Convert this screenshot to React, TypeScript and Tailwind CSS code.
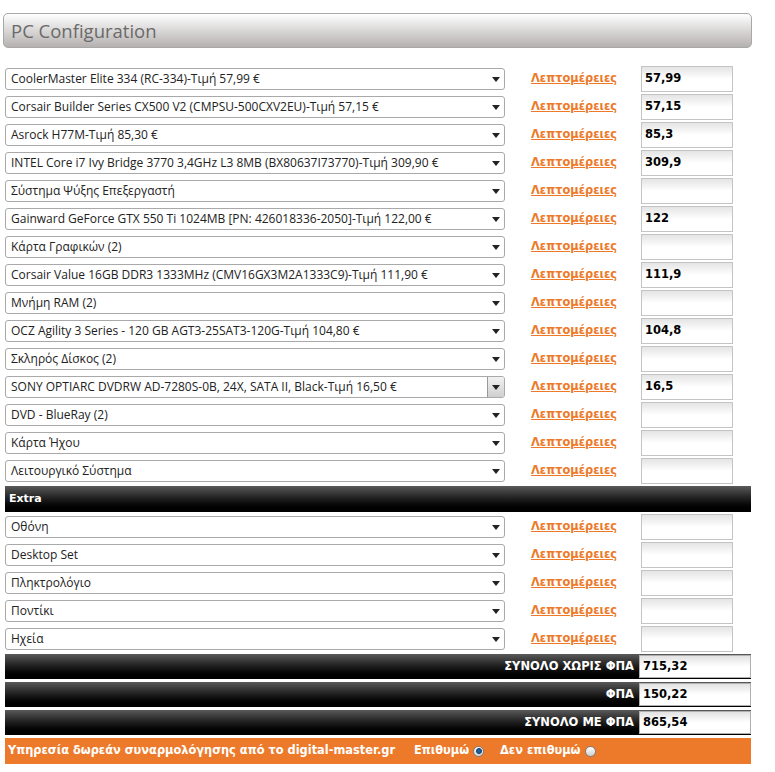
import React from 'react';

type Row = { label: string; price?: string; hover?: boolean };

const main: Row[] = [
  { label: 'CoolerMaster Elite 334 (RC-334)-Τιμή 57,99 €', price: '57,99' },
  { label: 'Corsair Builder Series CX500 V2 (CMPSU-500CXV2EU)-Τιμή 57,15 €', price: '57,15' },
  { label: 'Asrock H77M-Τιμή 85,30 €', price: '85,3' },
  { label: 'INTEL Core i7 Ivy Bridge 3770 3,4GHz L3 8MB (BX80637I73770)-Τιμή 309,90 €', price: '309,9' },
  { label: 'Σύστημα Ψύξης Επεξεργαστή' },
  { label: 'Gainward GeForce GTX 550 Ti 1024MB [PN: 426018336-2050]-Τιμή 122,00 €', price: '122' },
  { label: 'Κάρτα Γραφικών (2)' },
  { label: 'Corsair Value 16GB DDR3 1333MHz (CMV16GX3M2A1333C9)-Τιμή 111,90 €', price: '111,9' },
  { label: 'Μνήμη RAM (2)' },
  { label: 'OCZ Agility 3 Series - 120 GB AGT3-25SAT3-120G-Τιμή 104,80 €', price: '104,8' },
  { label: 'Σκληρός Δίσκος (2)' },
  { label: 'SONY OPTIARC DVDRW AD-7280S-0B, 24X, SATA II, Black-Τιμή 16,50 €', price: '16,5', hover: true },
  { label: 'DVD - BlueRay (2)' },
  { label: 'Κάρτα Ήχου' },
  { label: 'Λειτουργικό Σύστημα' },
];

const extra: Row[] = [
  { label: 'Οθόνη' },
  { label: 'Desktop Set' },
  { label: 'Πληκτρολόγιο' },
  { label: 'Ποντίκι' },
  { label: 'Ηχεία' },
];

const totals = [
  { label: 'ΣΥΝΟΛΟ ΧΩΡΙΣ ΦΠΑ', value: '715,32' },
  { label: 'ΦΠΑ', value: '150,22' },
  { label: 'ΣΥΝΟΛΟ ΜΕ ΦΠΑ', value: '865,54' },
];

const uiFont = { fontFamily: '"Open Sans", "Noto Sans", sans-serif' };
const verdana = { fontFamily: '"DejaVu Sans", Verdana, sans-serif' };

const Arrow = () => (
  <svg width="8" height="5" viewBox="0 0 8 5">
    <path d="M0 0h8L4 5z" fill="#222" />
  </svg>
);

const ConfigRow = ({ row }: { row: Row }) => (
  <div className="flex items-center h-[28px]">
    <div className="w-[500px] h-[22px] flex items-center border border-[#a9a9a9] rounded-[3px] bg-white">
      <span className="flex-1 pl-[5px] text-[12px] text-[#222] whitespace-nowrap overflow-hidden" style={uiFont}>
        {row.label}
      </span>
      {row.hover ? (
        <div className="w-[17px] h-[20px] flex items-center justify-center bg-gradient-to-b from-[#f2f2f2] to-[#cfcfcf] border-l border-[#9a9a9a] rounded-r-[2px]">
          <Arrow />
        </div>
      ) : (
        <div className="w-[17px] h-[20px] flex items-center justify-center">
          <Arrow />
        </div>
      )}
    </div>
    <a
      className="ml-[26px] w-[110px] text-[11.4px] font-bold text-[#ec7a2a] underline"
      style={verdana}
    >
      Λεπτομέρειες
    </a>
    <div
      className="w-[92px] h-[26px] flex items-center pl-[3px] border border-[#c4c4c4] bg-gradient-to-b from-[#e4e4e4] via-white to-white text-[11.5px] font-bold text-black"
      style={verdana}
    >
      {row.price}
    </div>
  </div>
);

const Radio = ({ checked }: { checked?: boolean }) => (
  <span className="inline-flex w-[11px] h-[11px] rounded-full border border-[#7d7d7d] bg-gradient-to-b from-white to-[#cfcfcf] items-center justify-center">
    {checked && <span className="w-[6px] h-[6px] rounded-full bg-[#1f5fa0] border border-[#0e3a66]" />}
  </span>
);

export default function App() {
  return (
    <div className="w-[775px] h-[772px] bg-white pt-[13px]">
      <div className="ml-[3px] w-[749px] h-[35px] flex items-center pl-[7px] border border-[#a8a8a8] rounded-[5px] bg-gradient-to-b from-white to-[#b5b1b0]">
        <span className="text-[18.5px] text-[#6a6a6a]" style={uiFont}>PC Configuration</span>
      </div>

      <div className="ml-[5px] w-[746px] mt-[17px]">
        {main.map((r, i) => (
          <ConfigRow key={i} row={r} />
        ))}

        <div className="h-[26px] mt-[1px] mb-[1px] flex items-center pl-[4px] bg-gradient-to-b from-[#5a5a5a] to-black">
          <span className="text-[11px] font-bold text-white" style={verdana}>Extra</span>
        </div>

        {extra.map((r, i) => (
          <ConfigRow key={i} row={r} />
        ))}

        <div className="flex flex-col gap-[3px] mt-[1px]">
          {totals.map((t) => (
            <div key={t.label} className="h-[25px] flex items-center justify-end bg-gradient-to-b from-[#5a5a5a] to-black">
              <span className="text-[11.5px] font-bold text-white mr-[5px]" style={verdana}>{t.label}</span>
              <div
                className="w-[112px] h-[23px] flex items-center pl-[3px] border border-[#b0b0b0] bg-gradient-to-b from-[#e2e2e2] via-white to-white text-[11.5px] font-bold text-black"
                style={verdana}
              >
                {t.value}
              </div>
            </div>
          ))}
        </div>

        <div className="h-[26px] mt-[3px] flex items-center pl-[3px] bg-[#ec7a2a] text-white text-[11.4px] font-bold" style={verdana}>
          <span>Υπηρεσία δωρεάν συναρμολόγησης από το digital-master.gr</span>
          <span className="ml-[19px]">Επιθυμώ</span>
          <span className="ml-[4px] flex"><Radio checked /></span>
          <span className="ml-[16px]">Δεν επιθυμώ</span>
          <span className="ml-[4px] flex"><Radio /></span>
        </div>
      </div>
    </div>
  );
}
